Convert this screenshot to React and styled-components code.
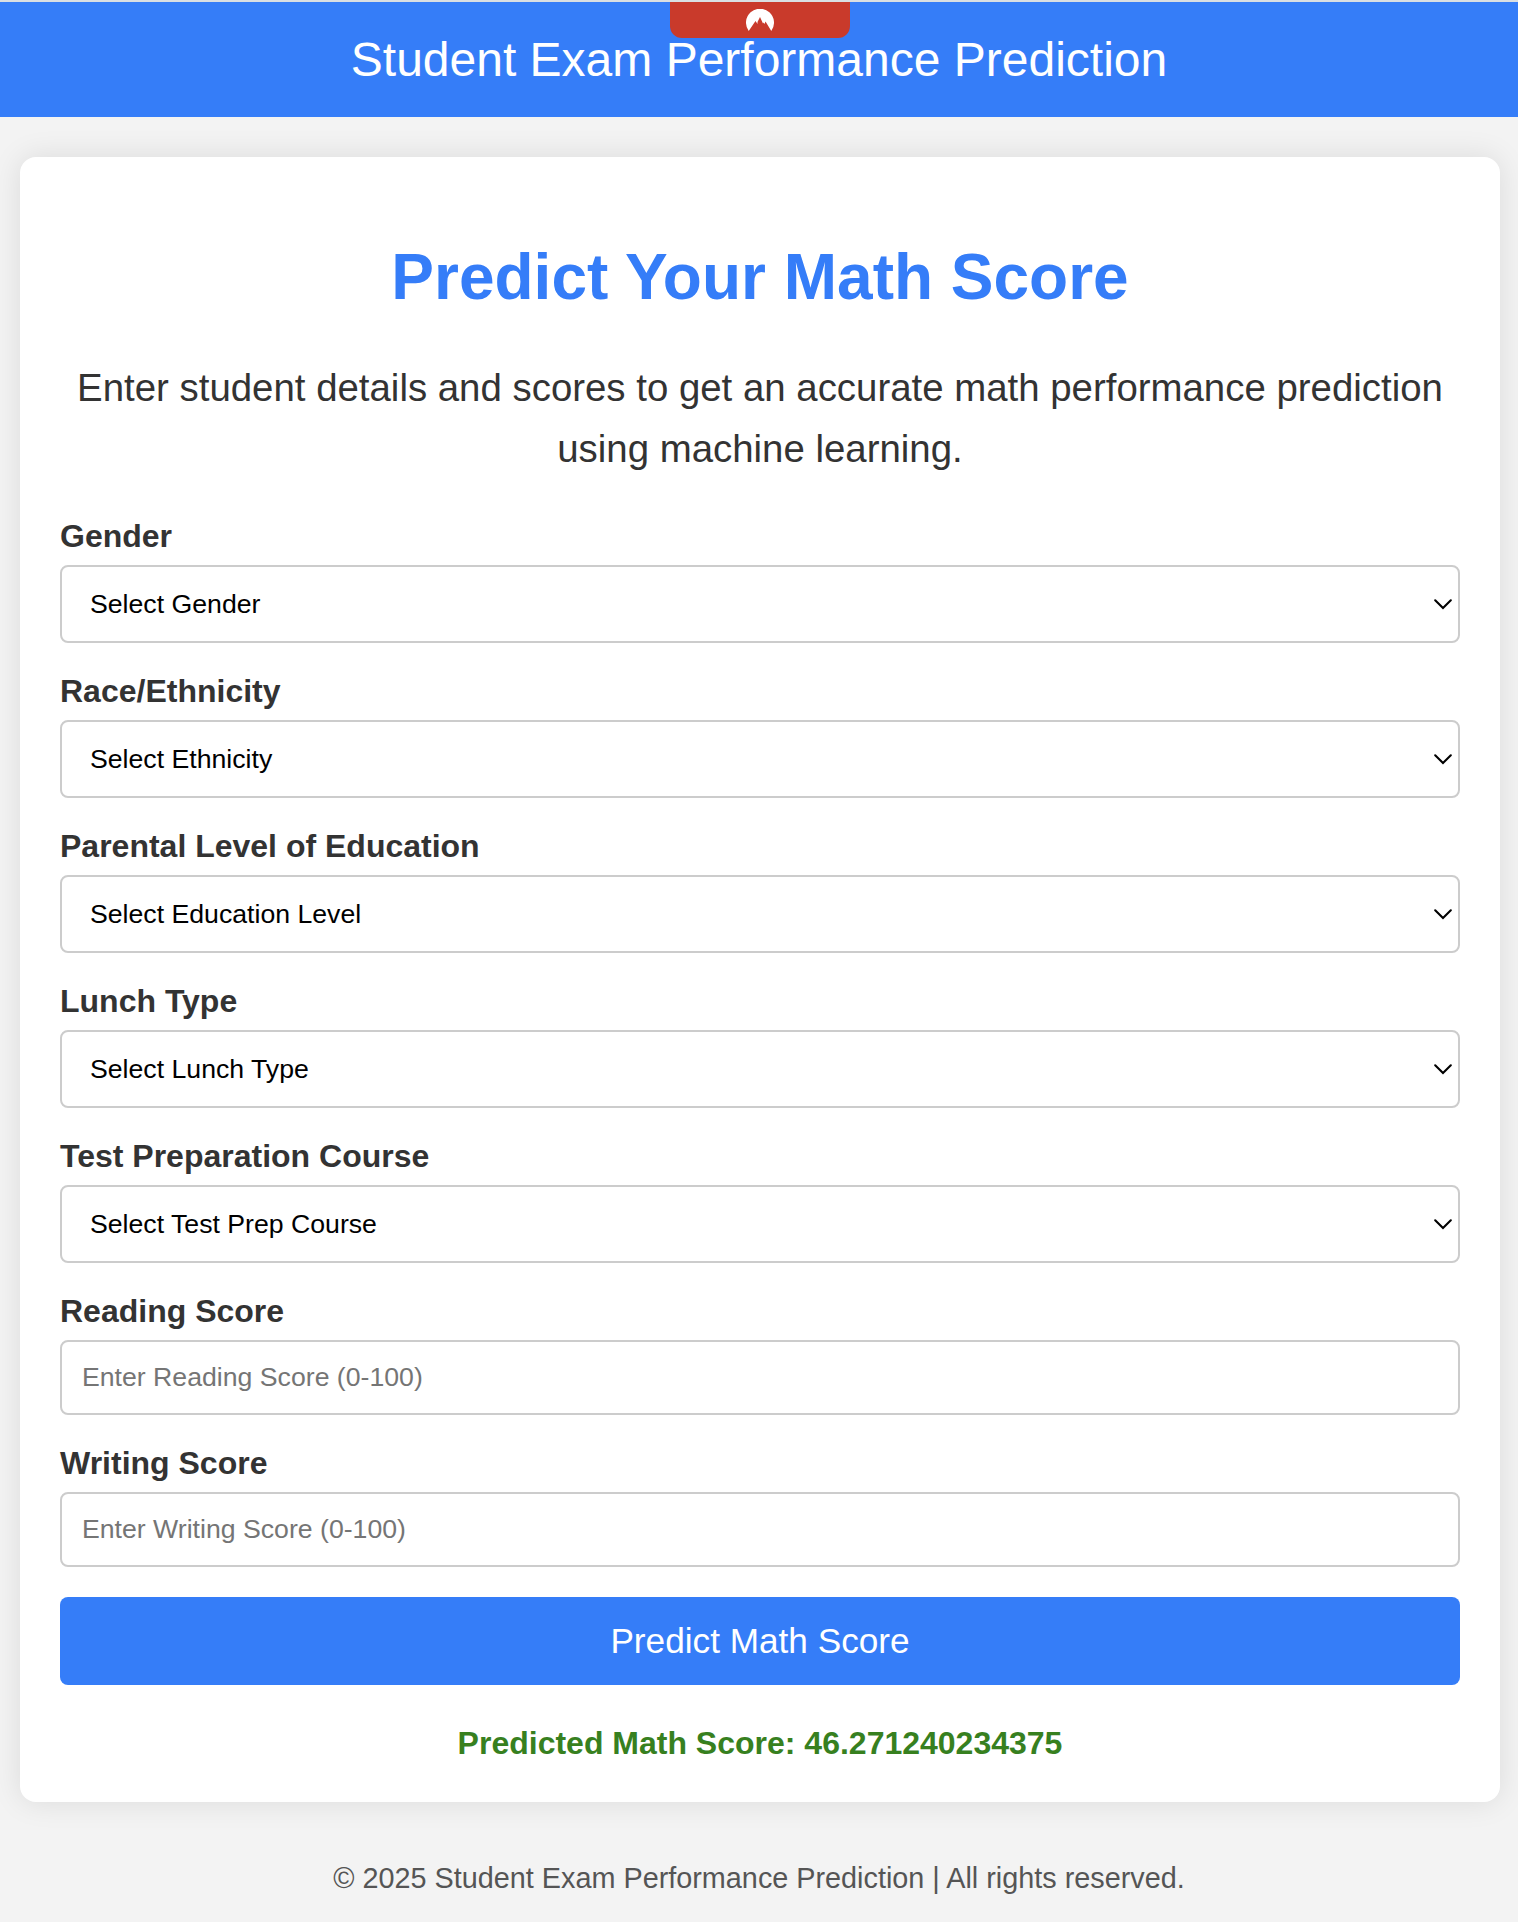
import React from "react";
import styled, { createGlobalStyle } from "styled-components";

const Global = createGlobalStyle`
  * { box-sizing: border-box; }
  body { margin: 0; background: #f3f3f3; color: #333; font-family: "Liberation Sans", Arial, sans-serif; line-height: 1.6; font-size: 32px; }
`;
const Page = styled.div`
  height: 1922px;
  overflow: hidden;
`;
const Header = styled.header`
  position: relative;
  height: 117px;
  padding-top: 20px;
  border-top: 2px solid #dadfe2;
  background: #357df8;
  color: #fff;
  text-align: center;
  font-size: 48px;
`;
const Title = styled.div`
  line-height: 76px;
`;
const Badge = styled.div`
  position: absolute;
  top: 0;
  left: 670px;
  width: 180px;
  height: 36px;
  display: flex;
  justify-content: center;
  padding-top: 7px;
  border-radius: 0 0 12px 12px;
  background: #c93a2b;
`;
const Card = styled.main`
  margin: 40px 18px 0 20px;
  height: 1645px;
  padding: 80px 40px 0;
  border-radius: 16px;
  background: #fff;
  box-shadow: 0 0 30px rgba(0, 0, 0, 0.1);
`;
const Heading = styled.h1`
  margin: 0;
  color: #357df8;
  text-align: center;
  font-size: 64px;
  line-height: 80px;
`;
const Intro = styled.p`
  margin: 40px 0 0;
  text-align: center;
  font-size: 38.4px;
  line-height: 61px;
`;
const Form = styled.form`
  display: flex;
  flex-direction: column;
  margin-top: 32px;
`;
const Field = styled.label`
  display: block;
  height: ${(p) => p.$height}px;
`;
const Name = styled.span`
  display: block;
  height: 54px;
  font-size: 32px;
  font-weight: bold;
  line-height: 51px;
`;
const Box = styled.span`
  display: flex;
  align-items: center;
  justify-content: space-between;
  height: 78px;
  padding: 0 6px 0 28px;
  border: 2px solid #ccc;
  border-radius: 8px;
  background: #fff;
  color: #000;
  font-size: 26.67px;
`;
const Input = styled.input`
  display: block;
  width: 100%;
  height: 75px;
  padding: 0 20px;
  border: 2px solid #ccc;
  border-radius: 8px;
  font: 26.67px "Liberation Sans", Arial, sans-serif;
  &::placeholder { color: #757575; }
`;
const Submit = styled.button`
  height: 88px;
  margin-top: 7px;
  border: 0;
  border-radius: 8px;
  background: #357df8;
  color: #fff;
  font: 35.2px "Liberation Sans", Arial, sans-serif;
`;
const Result = styled.p`
  margin: 33px 0 0;
  color: #37801f;
  text-align: center;
  font-weight: bold;
  line-height: 51px;
`;
const Footer = styled.footer`
  margin-top: 53px;
  color: #555;
  text-align: center;
  font-size: 28.8px;
  line-height: 46px;
`;

const selects = [
  ["Gender", "Select Gender"],
  ["Race/Ethnicity", "Select Ethnicity"],
  ["Parental Level of Education", "Select Education Level"],
  ["Lunch Type", "Select Lunch Type"],
  ["Test Preparation Course", "Select Test Prep Course"],
];

const Chevron = () => (
  <svg width="18" height="12" viewBox="0 0 18 12" fill="none" stroke="#000" strokeWidth="2.1" strokeLinecap="round">
    <path d="M1.2 2.3 9 10 16.8 2.3" />
  </svg>
);
const Mountain = () => (
  <svg width="28" height="23" viewBox="0 0 28 23">
    <path fill="#fff" d="M2.7 22A14 14 0 1 1 25.3 22L19.5 12.5 18.5 15 17.5 13.5 17 14.5 14 8 11.5 13 11.5 15 9.5 12Z" />
  </svg>
);

export default function App() {
  return (
    <Page>
      <Global />
      <Header>
        <Title>Student Exam Performance Prediction</Title>
        <Badge><Mountain /></Badge>
      </Header>
      <Card>
        <Heading>Predict Your Math Score</Heading>
        <Intro>Enter student details and scores to get an accurate math performance prediction using machine learning.</Intro>
        <Form>
          {selects.map(([label, value]) => (
            <Field key={label} $height={155}>
              <Name>{label}</Name>
              <Box>{value}<Chevron /></Box>
            </Field>
          ))}
          {["Reading", "Writing"].map((kind) => (
            <Field key={kind} $height={152}>
              <Name>{kind} Score</Name>
              <Input placeholder={`Enter ${kind} Score (0-100)`} />
            </Field>
          ))}
          <Submit type="button">Predict Math Score</Submit>
        </Form>
        <Result>Predicted Math Score: 46.271240234375</Result>
      </Card>
      <Footer>© 2025 Student Exam Performance Prediction | All rights reserved.</Footer>
    </Page>
  );
}
